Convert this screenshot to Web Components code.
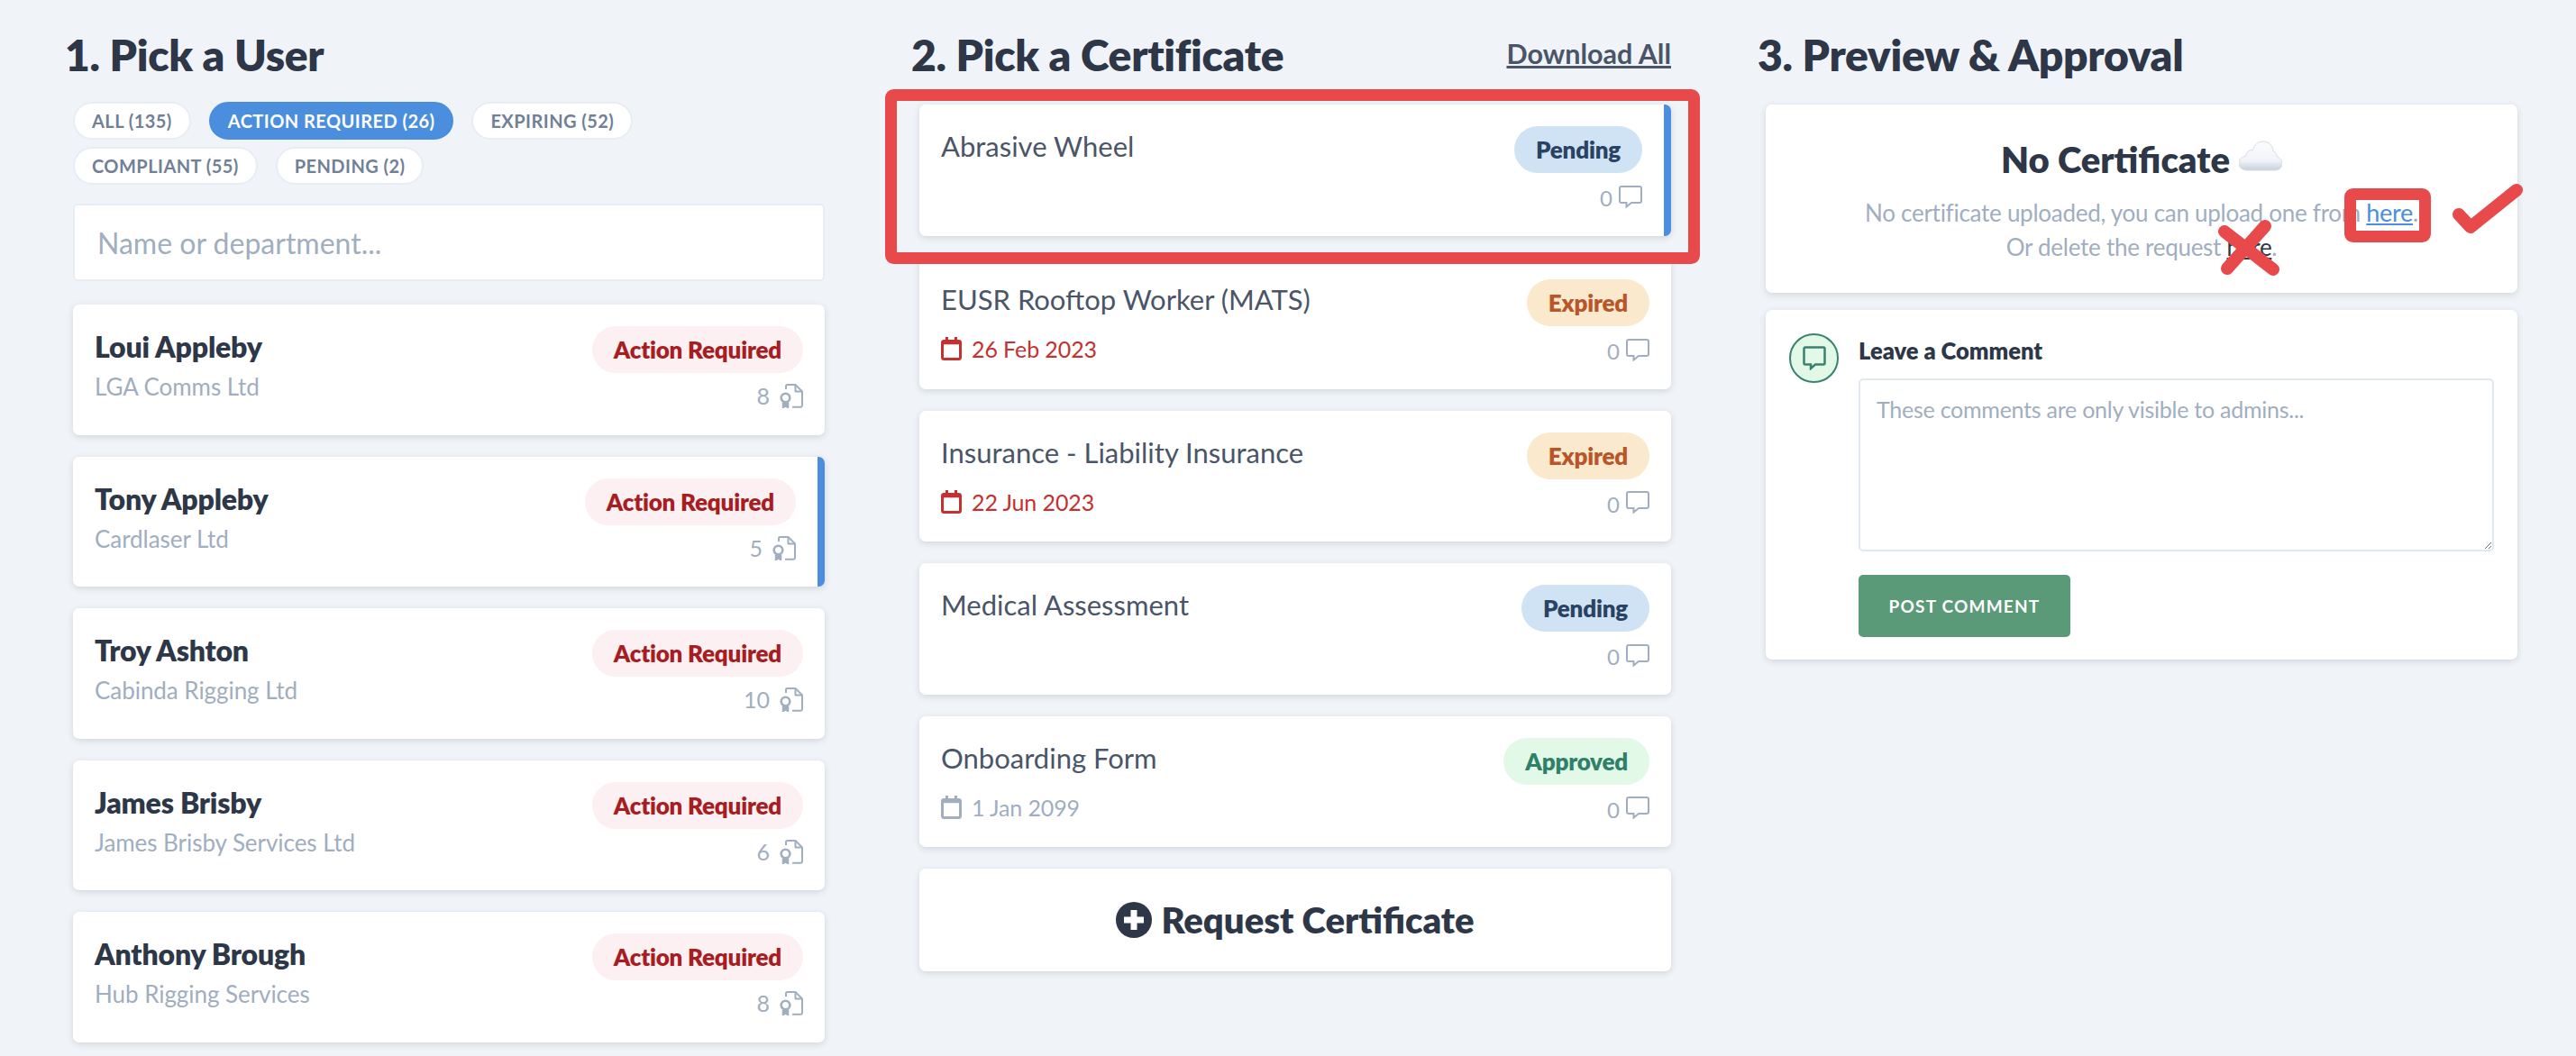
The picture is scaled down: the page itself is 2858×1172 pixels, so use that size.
<!DOCTYPE html>
<html lang="en">
<head>
  <meta charset="UTF-8">
  <title>Certificates</title>
  <style>
    html, body { margin:0; background:#f0f4f8; }
    body { font-family:Lato, "Liberation Sans", sans-serif; color:#2d3748; height:1172px; overflow:hidden; position:relative; }
    #board { display:grid; grid-template-columns:843px 843px 843px; column-gap:96px; padding:0 0 0 72px; }
  </style>
</head>
<body>
  <template id="column-tmpl">
    <style>
      :host { display:block; }
      header { display:flex; justify-content:space-between; align-items:flex-start; height:116px; box-sizing:border-box; padding-top:34px; }
      h2 { margin:0; font-size:48px; line-height:54px; font-weight:800; color:#2d3748; letter-spacing:-.3px; }
      ::slotted(a) { font-size:30.5px; line-height:36px; margin-top:7px; font-weight:700; color:#4a5568; text-decoration:underline; }
      main { margin-left:9px; display:flex; flex-direction:column; }
    </style>
    <header><h2><slot name="title"></slot></h2><slot name="action"></slot></header>
    <main><slot></slot></main>
  </template>

  <template id="filters-tmpl">
    <style>
      :host { display:flex; flex-wrap:wrap; gap:8px 20px; margin-top:-3px; margin-bottom:21px; }
    </style>
    <slot></slot>
  </template>

  <template id="pill-tmpl">
    <style>
      :host { display:block; height:42px; box-sizing:border-box; border:2px solid #e8edf3; border-radius:21px; padding:0 19px; background:#fff; font-size:20px; line-height:38px; font-weight:700; letter-spacing:.45px; color:#718096; }
      :host([active]) { background:#4a8edd; border-color:#4a8edd; color:#fff; }
    </style>
    <slot></slot>
  </template>

  <template id="search-tmpl">
    <style>
      :host { display:block; margin-bottom:26px; }
      input { display:block; width:100%; height:86px; box-sizing:border-box; border:2px solid #e8edf3; border-radius:5px; background:#fff; padding:0 25px; font:400 32px Lato, sans-serif; color:#2d3748; outline:none; }
      input::placeholder { color:#a0aec0; opacity:1; }
    </style>
    <input type="text" placeholder="Name or department...">
  </template>

  <template id="badge-tmpl">
    <style>
      :host { display:block; height:52px; border-radius:26px; padding:0 24px; font-size:26px; line-height:52px; font-weight:800; letter-spacing:-.2px; white-space:nowrap; }
      :host([kind=action]) { background:#fcf0f3; color:#a61e22; }
      :host([kind=pending]) { background:#d0e3f5; color:#2a4365; }
      :host([kind=expired]) { background:#fbe9cd; color:#b7562a; }
      :host([kind=approved]) { background:#e3f9e8; color:#2f8069; }
    </style>
    <slot></slot>
  </template>

  <template id="user-tmpl">
    <style>
      :host { display:block; background:#fff; border-radius:7px; box-shadow:0 2px 7px rgba(45,55,72,.16); margin-bottom:24px; height:144.5px; box-sizing:border-box; padding:24px; overflow:hidden; }
      :host([selected]) { border-right:8px solid #4a8edd; }
      .row { display:flex; justify-content:space-between; }
      .name { font-size:32px; line-height:36px; font-weight:800; letter-spacing:-.2px; color:#2d3748; margin-top:5px; }
      .company { font-size:26px; line-height:32px; letter-spacing:-.05px; color:#a0aec0; margin-top:10px; }
      .side { display:flex; flex-direction:column; align-items:flex-end; }
      .count { display:flex; align-items:center; gap:11px; margin-top:12px; font-size:25px; line-height:27px; color:#a0aec0; }
      svg { display:block; }
    </style>
    <div class="row">
      <div><div class="name"></div><div class="company"></div></div>
      <div class="side">
        <status-badge kind="action">Action Required</status-badge>
        <div class="count"><span class="num"></span>
          <svg width="26" height="27" viewBox="0 0 26 27" fill="none" stroke="#a0aec0" stroke-width="2"><path d="M7 6V2.800A1.800 1.800 0 0 1 8.800 1H17.500L25 8.500V24A1.800 1.800 0 0 1 23.200 25.800H14"/><path d="M17.500 1V8.500H25" stroke-linejoin="round"/><circle cx="6.500" cy="15.500" r="4.800" stroke-width="2.600"/><path d="M3.500 20.500V26.800L6.500 24.800L9.500 26.800V20.500" fill="#a0aec0" stroke-width="1.500"/></svg>
        </div>
      </div>
    </div>
  </template>

  <template id="cert-tmpl">
    <style>
      :host { display:block; background:#fff; border-radius:7px; box-shadow:0 2px 7px rgba(45,55,72,.16); margin-bottom:24px; height:145.5px; box-sizing:border-box; padding:24px; overflow:hidden; }
      :host([selected]) { border-right:8px solid #4a8edd; height:146px; }
      .row { display:flex; justify-content:space-between; }
      .title { font-size:31px; line-height:36px; color:#4a5568; margin-top:4px; }
      .side { display:flex; flex-direction:column; align-items:flex-end; }
      .count { display:flex; align-items:center; gap:7px; margin-top:11px; font-size:24px; line-height:26px; color:#a0aec0; }
      .count span { padding-top:4px; }
      .date { display:flex; align-items:center; gap:11px; margin-top:23px; font-size:25px; line-height:28px; letter-spacing:-.1px; color:#a0aec0; }
      .date svg { stroke:#a0aec0; fill:#a0aec0; }
      :host([overdue]) .date { color:#c53030; }
      :host([overdue]) .date svg { stroke:#c53030; fill:#c53030; }
      svg { display:block; }
    </style>
    <div class="row">
      <div><div class="title"></div>
        <div class="date">
          <svg width="23" height="26" viewBox="0 0 23 26"><rect x="1.500" y="4.500" width="20" height="20" rx="2" fill="none" stroke-width="3"/><path d="M1.500 4.500H21.500V7.500H1.500Z" stroke-width="1.500"/><path d="M6.500 0V4M16.500 0V4" stroke-width="3" fill="none"/></svg>
          <span class="when"></span>
        </div>
      </div>
      <div class="side">
        <status-badge></status-badge>
        <div class="count"><span>0</span>
          <svg width="26" height="25" viewBox="0 0 26 25" fill="none" stroke="#a0aec0" stroke-width="2"><path d="M3 1H23A2 2 0 0 1 25 3V17A2 2 0 0 1 23 19H14L8.500 23.500V19H3A2 2 0 0 1 1 17V3A2 2 0 0 1 3 1Z"/></svg>
        </div>
      </div>
    </div>
  </template>

  <template id="request-tmpl">
    <style>
      :host { display:flex; justify-content:center; align-items:center; gap:10px; height:114px; background:#fff; border-radius:7px; box-shadow:0 2px 7px rgba(45,55,72,.16); font-size:40px; font-weight:800; color:#2d3748; }
      svg { display:block; }
    </style>
    <svg width="40" height="40" viewBox="0 0 40 40"><circle cx="20" cy="20" r="20" fill="#2d3748"/><path d="M20 9V31M9 20H31" stroke="#fff" stroke-width="7"/></svg>
    <slot></slot>
  </template>

  <template id="preview-tmpl">
    <style>
      :host { display:block; background:#fff; border-radius:7px; box-shadow:0 2px 7px rgba(45,55,72,.16); height:209px; box-sizing:border-box; padding-top:38px; margin-bottom:19px; text-align:center; }
      h3 { margin:0; display:flex; justify-content:center; align-items:flex-start; gap:10px; font-size:40px; line-height:46px; font-weight:800; color:#2d3748; }
      h3 svg { margin-top:2px; }
      p { margin:17px 0 0; font-size:26px; line-height:38px; letter-spacing:-.27px; color:#a0aec0; }
      a { text-decoration:underline; }
      .up { color:#4a8edd; font-size:27px; }
      .del { color:#2d3748; }
    </style>
    <h3>No Certificate
      <svg width="48" height="34" viewBox="0 0 48 34">
        <defs><linearGradient id="cl" x1="0" y1="0" x2="0" y2="1"><stop offset="0" stop-color="#fbfcfe"/><stop offset=".65" stop-color="#f1f4f8"/><stop offset="1" stop-color="#c6d0dc"/></linearGradient></defs>
        <path d="M9 33C3.500 33 0 29.500 0 25C0 20.500 3.500 17.500 7.500 17.500C8 13 11.500 10 15.500 10.500C17 4.500 21.500 1 27 1C33 1 37.500 5.500 38 11.500C41 13.500 42.500 15.500 42.500 18C45.800 19.500 48 22 48 25.500C48 30 44.500 33 40 33Z" fill="url(#cl)" stroke="#d5dce5"/>
      </svg>
    </h3>
    <p>No certificate uploaded, you can upload one from <a class="up">here</a>.<br>Or delete the request <a class="del">here</a>.</p>
  </template>

  <template id="comment-tmpl">
    <style>
      :host { display:flex; gap:22px; background:#fff; border-radius:7px; box-shadow:0 2px 7px rgba(45,55,72,.16); height:388px; box-sizing:border-box; padding:26px 26px 0; }
      .avatar { flex:none; width:55px; height:55px; box-sizing:border-box; border:2px solid #38826f; border-radius:50%; background:#e3f9e8; display:flex; align-items:center; justify-content:center; }
      .body { flex:1; }
      .label { font-size:25.500px; line-height:30px; font-weight:800; color:#2d3748; margin-top:4px; }
      textarea { display:block; width:100%; height:192px; box-sizing:border-box; margin-top:16px; border:2px solid #e2e8f0; border-radius:5px; padding:14px 18px; font:400 25px/36px Lato, sans-serif; letter-spacing:-.25px; color:#2d3748; background:#fff; outline:none; resize:vertical; }
      textarea::placeholder { color:#a0aec0; opacity:1; }
      button { display:block; margin-top:26px; width:235px; height:69px; border:0; border-radius:5px; background:#5a9a78; color:#fff; font:700 19px Lato, sans-serif; letter-spacing:1.2px; text-transform:uppercase; }
      svg { display:block; }
    </style>
    <div class="avatar"><svg width="26" height="27" viewBox="0 0 26 27" fill="none" stroke="#38826f" stroke-width="2.500"><path d="M3 1.500H23A1.500 1.500 0 0 1 24.500 3V19A1.500 1.500 0 0 1 23 20.500H14L9 25V20.500H3A1.500 1.500 0 0 1 1.500 19V3A1.500 1.500 0 0 1 3 1.500Z"/></svg></div>
    <div class="body">
      <div class="label">Leave a Comment</div>
      <textarea placeholder="These comments are only visible to admins..."></textarea>
      <button>Post Comment</button>
    </div>
  </template>

  <template id="marks-tmpl">
    <style>
      :host { position:absolute; left:0; top:0; width:2858px; height:1172px; pointer-events:none; display:block; }
      svg { position:absolute; left:0; top:0; }
    </style>
    <svg width="2858" height="1172" viewBox="0 0 2858 1172" fill="none" stroke="#e84a4c">
      <rect x="988.500" y="105.500" width="891" height="181" rx="3" stroke-width="13"/>
      <rect x="2607.500" y="215.500" width="83" height="47" rx="3" stroke-width="13"/>
      <path d="M2728 238L2741 252L2792 211" stroke-width="14" stroke-linecap="round" stroke-linejoin="round"/>
      <path d="M2468 257L2522 299M2513 251L2471 298" stroke-width="14" stroke-linecap="round"/>
    </svg>
  </template>

  <div id="board">
    <pick-column>
      <span slot="title">1. Pick a User</span>
      <filter-bar>
        <filter-pill>ALL (135)</filter-pill>
        <filter-pill active>ACTION REQUIRED (26)</filter-pill>
        <filter-pill>EXPIRING (52)</filter-pill>
        <filter-pill>COMPLIANT (55)</filter-pill>
        <filter-pill>PENDING (2)</filter-pill>
      </filter-bar>
      <user-search></user-search>
      <user-card name="Loui Appleby" company="LGA Comms Ltd" count="8"></user-card>
      <user-card name="Tony Appleby" company="Cardlaser Ltd" count="5" selected></user-card>
      <user-card name="Troy Ashton" company="Cabinda Rigging Ltd" count="10"></user-card>
      <user-card name="James Brisby" company="James Brisby Services Ltd" count="6"></user-card>
      <user-card name="Anthony Brough" company="Hub Rigging Services" count="8"></user-card>
    </pick-column>

    <pick-column>
      <span slot="title">2. Pick a Certificate</span>
      <a slot="action">Download All</a>
      <cert-card title-text="Abrasive Wheel" status="pending" label="Pending" selected></cert-card>
      <cert-card title-text="EUSR Rooftop Worker (MATS)" status="expired" label="Expired" date="26 Feb 2023" overdue></cert-card>
      <cert-card title-text="Insurance - Liability Insurance" status="expired" label="Expired" date="22 Jun 2023" overdue></cert-card>
      <cert-card title-text="Medical Assessment" status="pending" label="Pending"></cert-card>
      <cert-card title-text="Onboarding Form" status="approved" label="Approved" date="1 Jan 2099"></cert-card>
      <request-card>Request Certificate</request-card>
    </pick-column>

    <pick-column>
      <span slot="title">3. Preview &amp; Approval</span>
      <preview-card></preview-card>
      <comment-card></comment-card>
    </pick-column>
  </div>

  <red-marks></red-marks>

  <script>
    function fromTemplate(el, id) {
      const root = el.attachShadow({ mode: 'open' });
      root.appendChild(document.getElementById(id).content.cloneNode(true));
      return root;
    }

    // elements that only need their template
    const plain = {
      'pick-column': 'column-tmpl',
      'filter-bar': 'filters-tmpl',
      'filter-pill': 'pill-tmpl',
      'user-search': 'search-tmpl',
      'status-badge': 'badge-tmpl',
      'request-card': 'request-tmpl',
      'preview-card': 'preview-tmpl',
      'comment-card': 'comment-tmpl',
      'red-marks': 'marks-tmpl'
    };
    for (const tag in plain) {
      customElements.define(tag, class extends HTMLElement {
        constructor() {
          super();
          fromTemplate(this, plain[tag]);
        }
      });
    }

    class UserCard extends HTMLElement {
      connectedCallback() {
        const root = fromTemplate(this, 'user-tmpl');
        root.querySelector('.name').textContent = this.getAttribute('name');
        root.querySelector('.company').textContent = this.getAttribute('company');
        root.querySelector('.num').textContent = this.getAttribute('count');
      }
    }
    customElements.define('user-card', UserCard);

    class CertCard extends HTMLElement {
      connectedCallback() {
        const root = fromTemplate(this, 'cert-tmpl');
        root.querySelector('.title').textContent = this.getAttribute('title-text');
        const badge = root.querySelector('status-badge');
        badge.setAttribute('kind', this.getAttribute('status'));
        badge.textContent = this.getAttribute('label');
        if (this.hasAttribute('date')) {
          root.querySelector('.when').textContent = this.getAttribute('date');
        } else {
          root.querySelector('.date').style.display = 'none';
        }
      }
    }
    customElements.define('cert-card', CertCard);
  </script>
</body>
</html>
